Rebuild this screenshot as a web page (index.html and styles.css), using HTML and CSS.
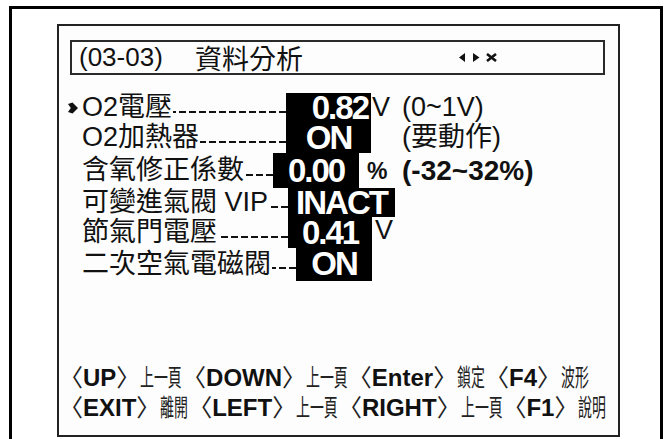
FILE: index.html
```html
<!DOCTYPE html>
<html lang="zh-Hant">
<head>
    <meta charset="UTF-8">
    <meta name="viewport" content="width=device-width, initial-scale=1.0">
    <title>資料分析</title>
    <link rel="stylesheet" href="styles.css">
</head>
<body>
    <div class="device">
        <div class="screen">
            <div class="titlebar">
                <span class="code">(03-03)</span>
                <span class="title">資料分析</span>
                <svg class="nav" width="38" height="9" viewBox="0 0 38 9">
                    <polygon points="6,0 0,4.5 6,9" fill="#111"/>
                    <polygon points="14,0 20.5,4.5 14,9" fill="#111"/>
                    <path d="M28 1 L37 8 M37 1 L28 8" stroke="#111" stroke-width="2.6"/>
                </svg>
            </div>

            <div class="rows">
                <div class="row r1">
                    <svg class="mark" width="10" height="12" viewBox="0 0 10 12">
                        <path d="M0 2 L4.5 0.5 L10 6 L4.5 11.5 L0 10 L2.8 6 Z" fill="#111"/>
                    </svg>
                    <div class="cell">
                        <span class="lead">O2電壓</span><span class="dash"></span>
                        <span class="val right">0.82</span>
                        <span class="unit">V</span>
                    </div>
                    <span class="note">(0~1V)</span>
                </div>

                <div class="row r2">
                    <span></span>
                    <div class="cell">
                        <span class="lead">O2加熱器</span><span class="dash"></span>
                        <span class="val">ON</span>
                        <span class="unit"></span>
                    </div>
                    <span class="note">(要動作)</span>
                </div>

                <div class="row r3">
                    <span></span>
                    <div class="cell">
                        <span class="lead">含氧修正係數</span><span class="dash"></span>
                        <span class="val">0.00</span>
                        <span class="unit small">%</span>
                    </div>
                    <span class="note bold">(-32~32%)</span>
                </div>

                <div class="row r4">
                    <span></span>
                    <div class="cell">
                        <span class="lead">可變進氣閥 VIP</span><span class="dash"></span>
                        <span class="val">INACT</span>
                        <span class="unit"></span>
                    </div>
                    <span class="note"></span>
                </div>

                <div class="row r5">
                    <span></span>
                    <div class="cell">
                        <span class="lead">節氣門電壓</span><span class="dash"></span>
                        <span class="val">0.41</span>
                        <span class="unit low">V</span>
                    </div>
                    <span class="note"></span>
                </div>

                <div class="row r6">
                    <span></span>
                    <div class="cell">
                        <span class="lead">二次空氣電磁閥</span><span class="dash"></span>
                        <span class="val">ON</span>
                        <span class="unit"></span>
                    </div>
                    <span class="note"></span>
                </div>
            </div>

            <div class="keys">
                <div class="line">〈<b>UP</b>〉<span class="sq c3">上一頁</span>〈<b>DOWN</b>〉<span class="sq c3">上一頁</span>〈<b>Enter</b>〉<span class="sq c2">鎖定</span>〈<b>F4</b>〉<span class="sq c2">波形</span></div>
                <div class="line">〈<b>EXIT</b>〉<span class="sq c2">離開</span>〈<b>LEFT</b>〉<span class="sq c3">上一頁</span>〈<b>RIGHT</b>〉<span class="sq c3">上一頁</span>〈<b>F1</b>〉<span class="sq c2">說明</span></div>
            </div>
        </div>
    </div>
</body>
</html>
```

FILE: styles.css
```css
* {
    box-sizing: border-box;
}

body {
    margin: 0;
    background-color: #fff;
    font-family: "Liberation Sans", "Noto Sans CJK TC", sans-serif;
    color: #111;
    overflow: hidden;
}

.device {
    margin: 6px 0 0 9px;
    width: 654px;
    height: 433px;
    border: 3px solid #000;
    border-bottom: none;
    padding: 15px 0 0 45px;
}

.screen {
    width: 563px;
    height: 413px;
    border: 2px solid #222;
    background-color: #fdfdfd;
    display: flex;
    flex-direction: column;
}

.titlebar {
    margin: 14px 0 0 11px;
    width: 535px;
    height: 35px;
    border: 2px solid #2a2a2a;
    display: flex;
    align-items: center;
    padding-left: 7px;
}

.code {
    font-size: 26px;
    width: 116px;
}

.title {
    font-size: 27px;
    width: 264px;
}

.nav {
    display: block;
}

.rows {
    margin-top: 18px;
    padding-left: 9px;
}

.row {
    display: grid;
    grid-template-columns: 14px 320px auto;
    align-items: center;
}

.mark {
    display: block;
}

.cell {
    display: flex;
    align-items: stretch;
    height: 100%;
}

.lead {
    display: flex;
    align-items: center;
    font-size: 27px;
    white-space: nowrap;
    line-height: 1;
}

/* dashed leader between label and value */
.dash {
    flex: 1;
    align-self: center;
    height: 2px;
    margin: 8px 0 0 1px;
    background: repeating-linear-gradient(to left, #111 0 7px, transparent 7px 10px);
}

.val {
    background-color: #000;
    color: #fff;
    font-weight: bold;
    font-size: 33px;
    letter-spacing: -2px;
    display: flex;
    align-items: center;
    justify-content: center;
    line-height: 24px;
}

.val.right {
    justify-content: flex-end;
    padding-right: 3px;
}

.unit {
    font-size: 27px;
    line-height: 1;
    display: flex;
    align-items: center;
    padding-left: 1px;
}

.unit.small {
    font-size: 23px;
    font-weight: bold;
    align-items: flex-end;
    padding: 0 0 5px 8px;
}

.unit.low {
    align-items: flex-end;
    padding: 0 0 4px 3px;
}

.note {
    font-size: 27px;
    line-height: 1;
    white-space: nowrap;
}

.bold {
    font-weight: bold;
    font-size: 28px;
}

.r1 { height: 29px; }
.r2 { height: 31px; }
.r3 { height: 35px; }
.r4 { height: 29px; }
.r5 { height: 30px; }
.r6 { height: 34px; }

.r1 .val, .r2 .val { width: 85px; }
.r1 .unit, .r2 .unit { width: 31px; }
.r3 .val { width: 86px; }
.r3 .unit { width: 43px; }
.r4 .val { width: 107px; }
.r4 .unit { width: 7px; }
.r5 .val { width: 84px; }
.r5 .unit { width: 30px; }
.r6 .val { width: 76px; }
.r6 .unit { width: 30px; }

.keys {
    margin-top: auto;
    padding: 0 0 12px 0;
    font-size: 24px;
    color: #222;
}

.line {
    height: 30px;
    line-height: 30px;
    white-space: nowrap;
}

.line b {
    font-weight: bold;
    color: #111;
}

.sq {
    display: inline-block;
    transform: scaleX(0.58);
    transform-origin: 0 50%;
}

.c2 { margin-right: -0.84em; }
.c3 { margin-right: -1.26em; }
```
